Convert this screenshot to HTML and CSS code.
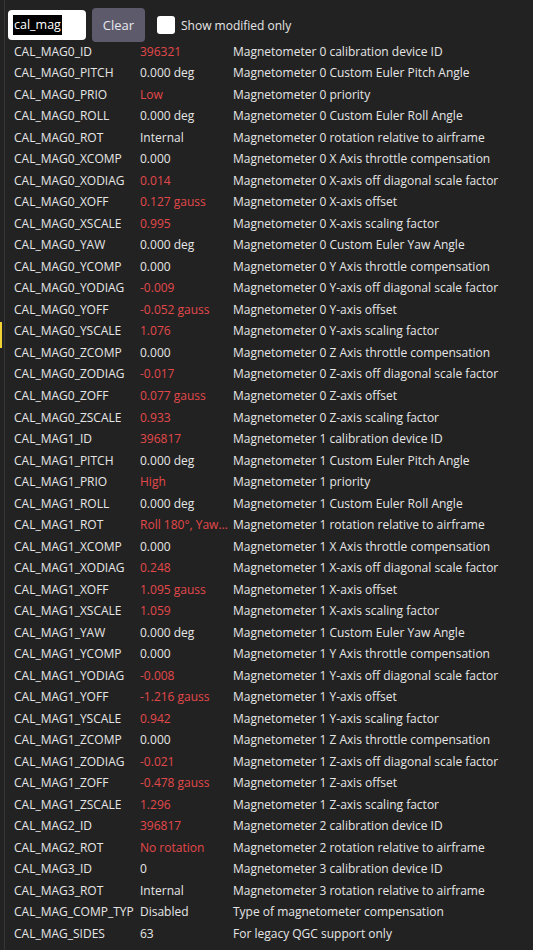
FILE: index.html
```html
<!DOCTYPE html>
<html>
<head>
<meta charset="utf-8">
<link rel="stylesheet" href="styles.css">
</head>
<body>
<div class="page">
  <div class="marker"></div>
  <div class="panel">
    <div class="toolbar">
      <div class="search"><span class="sel">cal_mag</span></div>
      <button class="btn">Clear</button>
      <label class="check"><span class="box"></span><span class="check-text">Show modified only</span></label>
    </div>
    <div class="list">
      <div class="row"><span class="name">CAL_MAG0_ID</span><span class="val mod">396321</span><span class="desc">Magnetometer 0 calibration device ID</span></div>
      <div class="row"><span class="name">CAL_MAG0_PITCH</span><span class="val">0.000 deg</span><span class="desc">Magnetometer 0 Custom Euler Pitch Angle</span></div>
      <div class="row"><span class="name">CAL_MAG0_PRIO</span><span class="val mod">Low</span><span class="desc">Magnetometer 0 priority</span></div>
      <div class="row"><span class="name">CAL_MAG0_ROLL</span><span class="val">0.000 deg</span><span class="desc">Magnetometer 0 Custom Euler Roll Angle</span></div>
      <div class="row"><span class="name">CAL_MAG0_ROT</span><span class="val">Internal</span><span class="desc">Magnetometer 0 rotation relative to airframe</span></div>
      <div class="row"><span class="name">CAL_MAG0_XCOMP</span><span class="val">0.000</span><span class="desc">Magnetometer 0 X Axis throttle compensation</span></div>
      <div class="row"><span class="name">CAL_MAG0_XODIAG</span><span class="val mod">0.014</span><span class="desc">Magnetometer 0 X-axis off diagonal scale factor</span></div>
      <div class="row"><span class="name">CAL_MAG0_XOFF</span><span class="val mod">0.127 gauss</span><span class="desc">Magnetometer 0 X-axis offset</span></div>
      <div class="row"><span class="name">CAL_MAG0_XSCALE</span><span class="val mod">0.995</span><span class="desc">Magnetometer 0 X-axis scaling factor</span></div>
      <div class="row"><span class="name">CAL_MAG0_YAW</span><span class="val">0.000 deg</span><span class="desc">Magnetometer 0 Custom Euler Yaw Angle</span></div>
      <div class="row"><span class="name">CAL_MAG0_YCOMP</span><span class="val">0.000</span><span class="desc">Magnetometer 0 Y Axis throttle compensation</span></div>
      <div class="row"><span class="name">CAL_MAG0_YODIAG</span><span class="val mod">-0.009</span><span class="desc">Magnetometer 0 Y-axis off diagonal scale factor</span></div>
      <div class="row"><span class="name">CAL_MAG0_YOFF</span><span class="val mod">-0.052 gauss</span><span class="desc">Magnetometer 0 Y-axis offset</span></div>
      <div class="row"><span class="name">CAL_MAG0_YSCALE</span><span class="val mod">1.076</span><span class="desc">Magnetometer 0 Y-axis scaling factor</span></div>
      <div class="row"><span class="name">CAL_MAG0_ZCOMP</span><span class="val">0.000</span><span class="desc">Magnetometer 0 Z Axis throttle compensation</span></div>
      <div class="row"><span class="name">CAL_MAG0_ZODIAG</span><span class="val mod">-0.017</span><span class="desc">Magnetometer 0 Z-axis off diagonal scale factor</span></div>
      <div class="row"><span class="name">CAL_MAG0_ZOFF</span><span class="val mod">0.077 gauss</span><span class="desc">Magnetometer 0 Z-axis offset</span></div>
      <div class="row"><span class="name">CAL_MAG0_ZSCALE</span><span class="val mod">0.933</span><span class="desc">Magnetometer 0 Z-axis scaling factor</span></div>
      <div class="row"><span class="name">CAL_MAG1_ID</span><span class="val mod">396817</span><span class="desc">Magnetometer 1 calibration device ID</span></div>
      <div class="row"><span class="name">CAL_MAG1_PITCH</span><span class="val">0.000 deg</span><span class="desc">Magnetometer 1 Custom Euler Pitch Angle</span></div>
      <div class="row"><span class="name">CAL_MAG1_PRIO</span><span class="val mod">High</span><span class="desc">Magnetometer 1 priority</span></div>
      <div class="row"><span class="name">CAL_MAG1_ROLL</span><span class="val">0.000 deg</span><span class="desc">Magnetometer 1 Custom Euler Roll Angle</span></div>
      <div class="row"><span class="name">CAL_MAG1_ROT</span><span class="val mod">Roll 180°, Yaw 90°</span><span class="desc">Magnetometer 1 rotation relative to airframe</span></div>
      <div class="row"><span class="name">CAL_MAG1_XCOMP</span><span class="val">0.000</span><span class="desc">Magnetometer 1 X Axis throttle compensation</span></div>
      <div class="row"><span class="name">CAL_MAG1_XODIAG</span><span class="val mod">0.248</span><span class="desc">Magnetometer 1 X-axis off diagonal scale factor</span></div>
      <div class="row"><span class="name">CAL_MAG1_XOFF</span><span class="val mod">1.095 gauss</span><span class="desc">Magnetometer 1 X-axis offset</span></div>
      <div class="row"><span class="name">CAL_MAG1_XSCALE</span><span class="val mod">1.059</span><span class="desc">Magnetometer 1 X-axis scaling factor</span></div>
      <div class="row"><span class="name">CAL_MAG1_YAW</span><span class="val">0.000 deg</span><span class="desc">Magnetometer 1 Custom Euler Yaw Angle</span></div>
      <div class="row"><span class="name">CAL_MAG1_YCOMP</span><span class="val">0.000</span><span class="desc">Magnetometer 1 Y Axis throttle compensation</span></div>
      <div class="row"><span class="name">CAL_MAG1_YODIAG</span><span class="val mod">-0.008</span><span class="desc">Magnetometer 1 Y-axis off diagonal scale factor</span></div>
      <div class="row"><span class="name">CAL_MAG1_YOFF</span><span class="val mod">-1.216 gauss</span><span class="desc">Magnetometer 1 Y-axis offset</span></div>
      <div class="row"><span class="name">CAL_MAG1_YSCALE</span><span class="val mod">0.942</span><span class="desc">Magnetometer 1 Y-axis scaling factor</span></div>
      <div class="row"><span class="name">CAL_MAG1_ZCOMP</span><span class="val">0.000</span><span class="desc">Magnetometer 1 Z Axis throttle compensation</span></div>
      <div class="row"><span class="name">CAL_MAG1_ZODIAG</span><span class="val mod">-0.021</span><span class="desc">Magnetometer 1 Z-axis off diagonal scale factor</span></div>
      <div class="row"><span class="name">CAL_MAG1_ZOFF</span><span class="val mod">-0.478 gauss</span><span class="desc">Magnetometer 1 Z-axis offset</span></div>
      <div class="row"><span class="name">CAL_MAG1_ZSCALE</span><span class="val mod">1.296</span><span class="desc">Magnetometer 1 Z-axis scaling factor</span></div>
      <div class="row"><span class="name">CAL_MAG2_ID</span><span class="val mod">396817</span><span class="desc">Magnetometer 2 calibration device ID</span></div>
      <div class="row"><span class="name">CAL_MAG2_ROT</span><span class="val mod">No rotation</span><span class="desc">Magnetometer 2 rotation relative to airframe</span></div>
      <div class="row"><span class="name">CAL_MAG3_ID</span><span class="val">0</span><span class="desc">Magnetometer 3 calibration device ID</span></div>
      <div class="row"><span class="name">CAL_MAG3_ROT</span><span class="val">Internal</span><span class="desc">Magnetometer 3 rotation relative to airframe</span></div>
      <div class="row"><span class="name">CAL_MAG_COMP_TYP</span><span class="val">Disabled</span><span class="desc">Type of magnetometer compensation</span></div>
      <div class="row"><span class="name">CAL_MAG_SIDES</span><span class="val">63</span><span class="desc">For legacy QGC support only</span></div>
    </div>
  </div>
</div>
</body>
</html>
```
FILE: styles.css
```css
html, body {
  margin: 0;
  padding: 0;
  background: #222222;
}
body {
  font-family: "Open Sans", "Noto Sans", sans-serif;
  color: #e6e6e6;
  font-size: 12px;
}
.page {
  position: relative;
  height: 950px;
  overflow: hidden;
  padding-left: 4px;
}
.marker {
  position: absolute;
  left: 0;
  top: 322px;
  width: 2px;
  height: 26px;
  background: #f2d335;
}
.panel {
  border-left: 1px solid #363636;
  height: 100%;
  padding-left: 3px;
}
.toolbar {
  display: flex;
  align-items: flex-start;
  gap: 6px;
  padding-top: 8px;
  height: 32.5px;
}
.search {
  margin-top: 2px;
  width: 78px;
  height: 30px;
  background: #ffffff;
  border-radius: 4px;
  display: flex;
  align-items: center;
  padding-left: 5px;
  box-sizing: border-box;
}
.sel {
  background: #000000;
  color: #ffffff;
  font-size: 12.5px;
  line-height: 20px;
  padding: 0 1px;
}
.btn {
  width: 53px;
  height: 34px;
  border: none;
  border-radius: 4px;
  background: #5d5b6b;
  color: #e8e8ee;
  font-family: "Open Sans", "Noto Sans", sans-serif;
  font-size: 13px;
  padding: 0;
}
.check {
  display: flex;
  align-items: center;
  gap: 6px;
  margin-left: 6px;
  height: 34px;
}
.box {
  width: 18px;
  height: 18px;
  background: #ffffff;
  border-radius: 3px;
}
.check-text {
  font-size: 12px;
  color: #e6e6e6;
}
.list {
  display: flex;
  flex-direction: column;
}
.row {
  display: flex;
  height: 21.53px;
  align-items: center;
  padding-left: 6px;
  white-space: nowrap;
}
.name {
  width: 126px;
  flex: none;
}
.val {
  width: 88px;
  margin-right: 5px;
  flex: none;
  overflow: hidden;
  text-overflow: ellipsis;
}
.mod {
  color: #e2494b;
}
.desc {
  flex: none;
}
```
